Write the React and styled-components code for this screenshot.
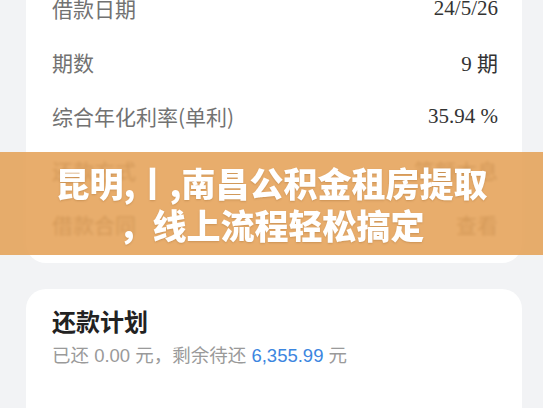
import React from 'react';
import styled, { createGlobalStyle } from 'styled-components';

const GlobalStyle = createGlobalStyle`
  html, body {
    margin: 0;
    padding: 0;
    background: #f2f3f5;
    overflow: hidden;
  }
`;

const details = [
  { label: '借款日期', value: '24/5/26', serif: true },
  { label: '期数', value: '9 期', serif: true },
  { label: '综合年化利率(单利)', value: '35.94 %', serif: true },
  { label: '还款方式', value: '等额本息' },
  { label: '借款合同', value: '查看' },
];

const App = () => {
  return (
    <Screen>
      <GlobalStyle />
      <Page>
        <DetailCard>
          {details.map(row => (
            <Row key={row.label}>
              <Label>{row.label}</Label>
              <Value serif={row.serif}>{row.value}</Value>
            </Row>
          ))}
        </DetailCard>
        <PlanCard>
          <PlanTitle>还款计划</PlanTitle>
          <PlanSummary>
            已还 0.00 元，剩余待还 <Amount>6,355.99</Amount> 元
          </PlanSummary>
        </PlanCard>
      </Page>
      <Banner>
        <BannerLine>昆明,丨,南昌公积金租房提取</BannerLine>
        <BannerLine>，线上流程轻松搞定</BannerLine>
      </Banner>
    </Screen>
  );
};

const Screen = styled.div`
  position: relative;
  width: 543px;
  height: 408px;
  overflow: hidden;
`;

const Page = styled.div`
  display: flex;
  flex-direction: column;
  gap: 26px;
  margin-top: -31px;
  padding: 0 21px 0 26px;
`;

const DetailCard = styled.div`
  background: #fff;
  border-radius: 20px;
  padding: 12px 24px 12px 26px;
`;

const Row = styled.div`
  display: flex;
  align-items: center;
  justify-content: space-between;
  height: 54px;
`;

const Label = styled.span`
  font-family: "Noto Sans CJK SC", sans-serif;
  font-size: 21px;
  color: #727272;
`;

const Value = styled.span`
  font-family: ${props => (props.serif ? '"Liberation Serif", "Noto Sans CJK SC", serif' : '"Noto Sans CJK SC", sans-serif')};
  font-size: 21px;
  color: ${props => (props.serif ? '#333' : '#727272')};
`;

const PlanCard = styled.div`
  background: #fff;
  border-radius: 20px;
  padding: 16px 24px 40px 26px;
  min-height: 120px;
`;

const PlanTitle = styled.div`
  font-family: "Noto Sans CJK SC", sans-serif;
  font-size: 24px;
  font-weight: 700;
  color: #222;
  line-height: 32px;
`;

const PlanSummary = styled.div`
  margin-top: 7px;
  font-family: "Liberation Sans", "Noto Sans CJK SC", sans-serif;
  font-size: 18.5px;
  color: #9a9a9a;
  line-height: 24px;
`;

const Amount = styled.span`
  color: #3c86e0;
`;

const Banner = styled.div`
  position: absolute;
  top: 152px;
  left: 0;
  right: 0;
  height: 103px;
  display: flex;
  flex-direction: column;
  align-items: center;
  justify-content: center;
  background: rgba(228, 160, 84, 0.86);
  backdrop-filter: blur(1.5px);
`;

const BannerLine = styled.div`
  font-family: "Noto Sans CJK SC", sans-serif;
  font-size: 34px;
  font-weight: 900;
  line-height: 42px;
  color: #fff;
  white-space: nowrap;
  text-shadow: 0 1px 2px rgba(120, 70, 20, 0.25);
`;

export default App;
